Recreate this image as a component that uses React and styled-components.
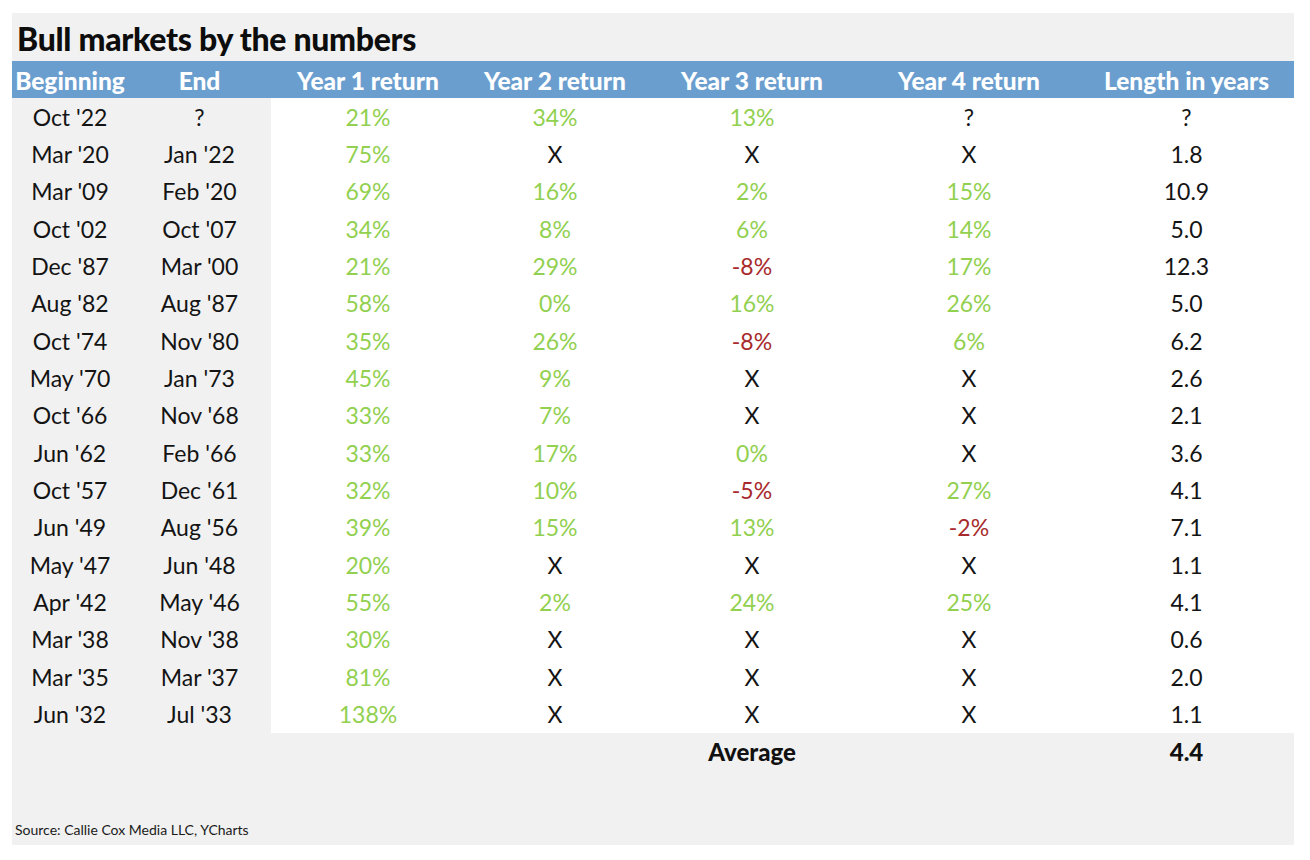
import React from "react";
import styled, { createGlobalStyle } from "styled-components";

const Global = createGlobalStyle`
  html, body { margin: 0; padding: 0; background: #ffffff; }
  body { font-family: Lato, "Liberation Sans", sans-serif; }
`;

const Page = styled.div`
  padding: 13px 16px 15px 12px;
`;

const Panel = styled.div`
  width: 1282px;
  height: 832px;
  background: #f1f1f1;
  display: flex;
  flex-direction: column;
`;

const Title = styled.h1`
  margin: 0;
  height: 48px;
  display: flex;
  align-items: center;
  padding: 2px 0 0 5px;
  box-sizing: border-box;
  font-size: 32px;
  font-weight: 900;
  color: #0d0d0d;
  letter-spacing: -0.3px;
`;

const COLS = "116px 143px 194px 180px 214px 220px 215px";

const HeaderRow = styled.div`
  display: grid;
  grid-template-columns: ${COLS};
  height: 37px;
  background: #6a9ecf;
`;

const HeadCell = styled.div`
  display: flex;
  align-items: center;
  justify-content: center;
  color: #ffffff;
  font-weight: 900;
  font-size: 24.5px;
  padding-top: 1px;
  white-space: nowrap;
`;

const Row = styled.div`
  display: grid;
  grid-template-columns: ${COLS};
  height: 37.35px;
`;

const Cell = styled.div`
  display: flex;
  align-items: center;
  justify-content: center;
  font-size: 23px;
  font-weight: 400;
  color: ${(p) => (p.$tone === "pos" ? "#92d050" : p.$tone === "neg" ? "#a82a2c" : "#141414")};
  background: ${(p) => (p.$white ? "#ffffff" : "transparent")};
`;

const AvgCell = styled(Cell)`
  font-weight: 900;
  font-size: 24px;
  color: #111;
`;

const Source = styled.div`
  margin-top: auto;
  padding: 0 0 7px 3px;
  font-size: 14px;
  color: #1a1a1a;
`;

const rows = [
  ["Oct '22", "?", "21%", "34%", "13%", "?", "?"],
  ["Mar '20", "Jan '22", "75%", "X", "X", "X", "1.8"],
  ["Mar '09", "Feb '20", "69%", "16%", "2%", "15%", "10.9"],
  ["Oct '02", "Oct '07", "34%", "8%", "6%", "14%", "5.0"],
  ["Dec '87", "Mar '00", "21%", "29%", "-8%", "17%", "12.3"],
  ["Aug '82", "Aug '87", "58%", "0%", "16%", "26%", "5.0"],
  ["Oct '74", "Nov '80", "35%", "26%", "-8%", "6%", "6.2"],
  ["May '70", "Jan '73", "45%", "9%", "X", "X", "2.6"],
  ["Oct '66", "Nov '68", "33%", "7%", "X", "X", "2.1"],
  ["Jun '62", "Feb '66", "33%", "17%", "0%", "X", "3.6"],
  ["Oct '57", "Dec '61", "32%", "10%", "-5%", "27%", "4.1"],
  ["Jun '49", "Aug '56", "39%", "15%", "13%", "-2%", "7.1"],
  ["May '47", "Jun '48", "20%", "X", "X", "X", "1.1"],
  ["Apr '42", "May '46", "55%", "2%", "24%", "25%", "4.1"],
  ["Mar '38", "Nov '38", "30%", "X", "X", "X", "0.6"],
  ["Mar '35", "Mar '37", "81%", "X", "X", "X", "2.0"],
  ["Jun '32", "Jul '33", "138%", "X", "X", "X", "1.1"],
];

const headers = ["Beginning", "End", "Year 1 return", "Year 2 return", "Year 3 return", "Year 4 return", "Length in years"];

function tone(v, i) {
  if (i < 2 || i === 6) return "plain";
  if (v.endsWith("%")) return v.startsWith("-") ? "neg" : "pos";
  return "plain";
}

export default function App() {
  return (
    <>
      <Global />
      <Page>
        <Panel>
          <Title>Bull markets by the numbers</Title>
          <HeaderRow>
            {headers.map((h) => (
              <HeadCell key={h}>{h}</HeadCell>
            ))}
          </HeaderRow>
          {rows.map((r, ri) => (
            <Row key={ri}>
              {r.map((v, i) => (
                <Cell key={i} $white={i >= 2} $tone={tone(v, i)}>
                  {v}
                </Cell>
              ))}
            </Row>
          ))}
          <Row>
            <Cell />
            <Cell />
            <Cell />
            <Cell />
            <AvgCell>Average</AvgCell>
            <Cell />
            <AvgCell>4.4</AvgCell>
          </Row>
          <Source>Source: Callie Cox Media LLC, YCharts</Source>
        </Panel>
      </Page>
    </>
  );
}
